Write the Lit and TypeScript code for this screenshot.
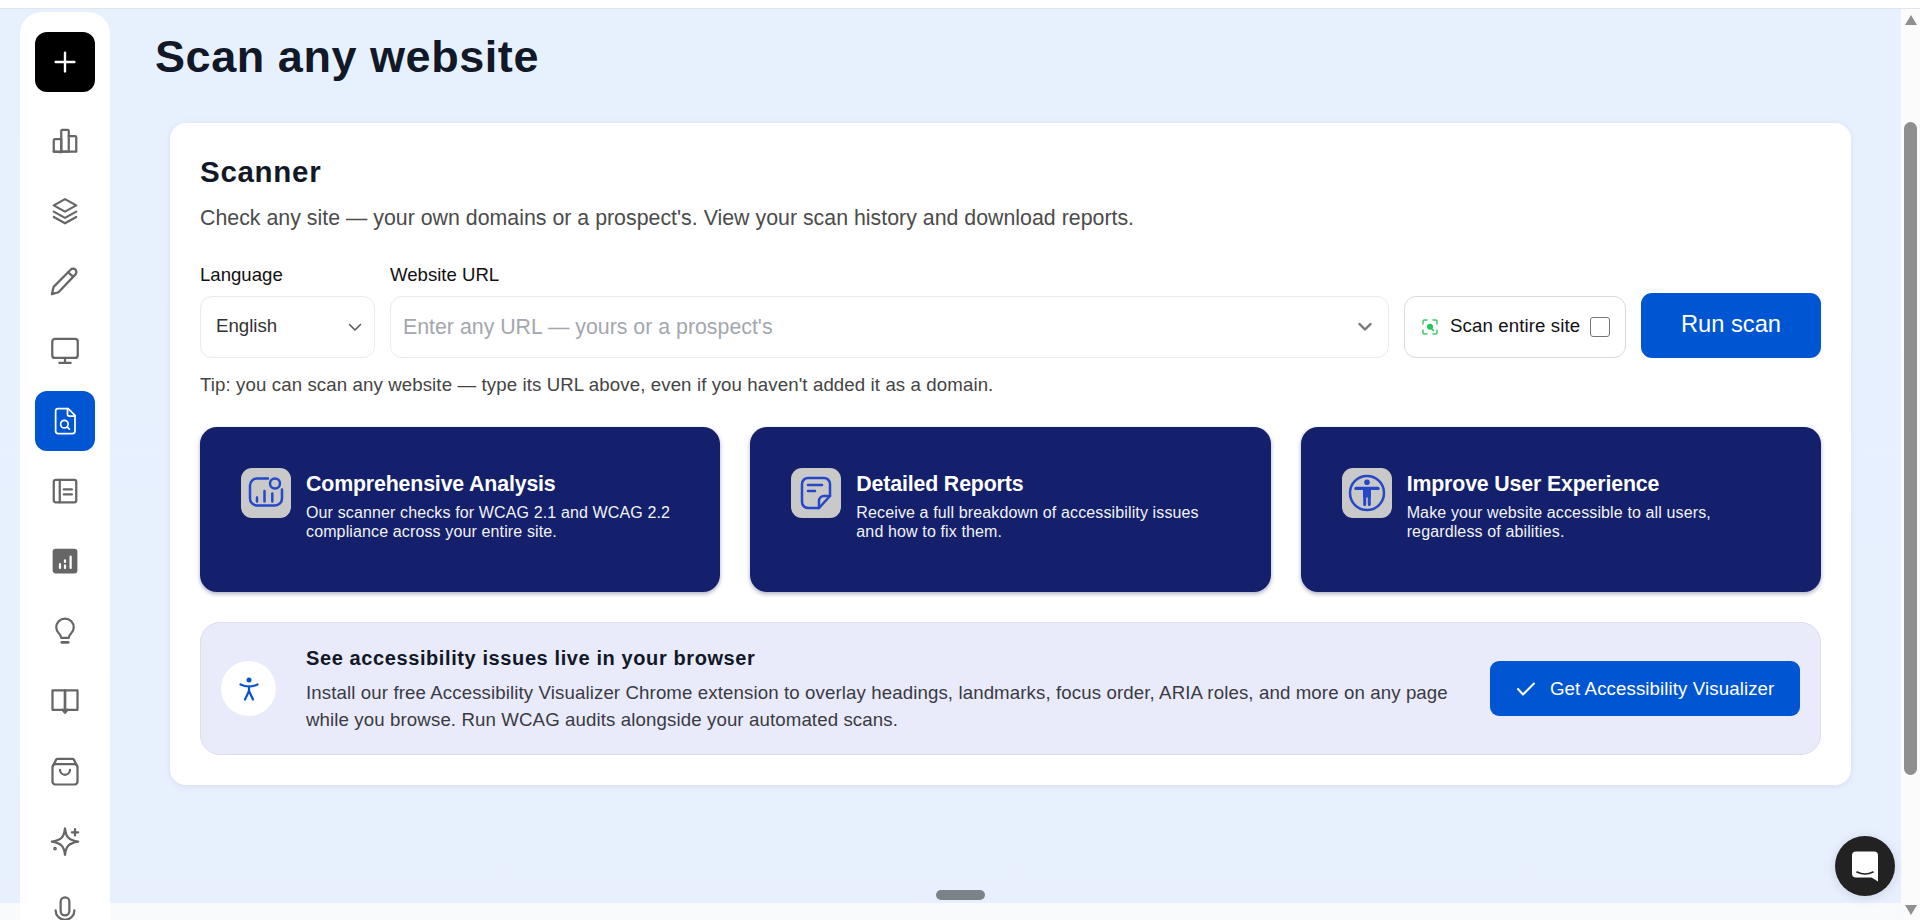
import { LitElement, html, css, svg } from "lit";
import { customElement } from "lit/decorators.js";

const navIcons = [
  svg`<path d="M3 20.500V11.500a1 1 0 0 1 1-1h5v10.500z"/><path d="M9 20.500V4a1 1 0 0 1 1-1h4a1 1 0 0 1 1 1v16.500z"/><path d="M15 8h5a1 1 0 0 1 1 1v11.500H3"/>`,
  svg`<path d="M12 2.500l9 5-9 5-9-5z"/><path d="M3 12.500l9 5 9-5"/><path d="M3 16.800l9 5 9-5"/>`,
  svg`<path d="M1.500 22.500l1.400-5.800L16.500 3a2.600 2.600 0 0 1 3.900 3.700L6.800 21z"/><path d="M14.600 5l3.900 3.700"/>`,
  svg`<rect x="1.800" y="2.300" width="20.400" height="15.200" rx="2.200"/><path d="M12 17.500v4M7.500 21.500h9"/>`,
];
const navIconsAfter = [
  svg`<rect x="3" y="3" width="18" height="18" rx="1.500"/><path d="M7.800 3v18M11 10.700h6.500M11 14.700h6.500"/>`,
  svg`<rect x="3" y="3" width="18" height="18" rx="1.500" fill="#666"/><path stroke="#fff" d="M8 14.500v3M12 11.500v1.200M12 15.500v2M16.500 8.500v9"/>`,
  svg`<path d="M9 17.500c0-1.600-.8-2.400-1.700-3.300A7 7 0 1 1 16.700 14.200C15.800 15.100 15 15.900 15 17.500z"/><path d="M9.500 21h5" stroke-width="2.200"/>`,
  svg`<path d="M2 3.500h10v15.500H2z"/><path d="M12 3.500h10v15.500H12z"/><path d="M10 19l2 2.500 2-2.500"/><path d="M12 5v14"/>`,
  svg`<rect x="2" y="6.500" width="20" height="16.300" rx="2.500"/><path d="M2.300 8l2.700-5.300c.2-.3.5-.5.9-.5h12.200c.4 0 .7.2.9.5L21.700 8"/><path d="M8 11a4 4 0 0 0 8 0"/>`,
  svg`<path d="M12 2C12.800 9 15 11.300 22.500 12.500 15 13.700 12.800 16 12 23 11.200 16 9 13.700 1.500 12.500 9 11.300 11.200 9 12 2z"/><path d="M20 2.500v5M17.500 5h5"/><circle cx="4" cy="18" r=".6"/>`,
  svg`<rect x="8.500" y="1" width="7" height="14.500" rx="3.500"/><path d="M4.500 11.500a7.500 7.500 0 0 0 15 0"/><path d="M12 19v4"/>`,
];

@customElement("app-root")
export class AppRoot extends LitElement {
  static styles = css`
    :host { display: block; height: 920px; overflow: hidden; font-family: "Liberation Sans", Arial, sans-serif; color: #111827; position: relative; background: #fff; }
    * { box-sizing: border-box; }
    .top { height: 9px; background: #fff; border-bottom: 1px solid #dfe5ea; }
    .body { display: flex; height: 911px; }
    .col { flex: 1; min-width: 0; display: flex; flex-direction: column; position: relative; }
    .stage { flex: 1; min-height: 0; display: flex; background: linear-gradient(#e7f1fe, #e8f0fe); }
    .strip { height: 17px; background: #f8fafc; }
    .scrollbar { width: 19px; background: #fbfbfb; position: relative; display: flex; flex-direction: column; align-items: center; }
    .arrow-up { width: 0; height: 0; border-left: 6.500px solid transparent; border-right: 6.500px solid transparent; border-bottom: 10px solid #8f8f8f; margin-top: 6px; }
    .thumb { width: 13px; height: 653px; margin-top: 97px; background: #8f8f8f; border-radius: 7px; }
    .arrow-down { width: 0; height: 0; border-left: 6.500px solid transparent; border-right: 6.500px solid transparent; border-top: 10px solid #8f8f8f; margin-top: 130px; }

    .side { width: 90px; margin: 3px 0 -60px 20px; background: #fff; border-radius: 22px 22px 0 0; display: flex; flex-direction: column; align-items: center; padding-top: 20px; flex: none; position: relative; z-index: 1; height: 1000px; }
    .nav { width: 60px; height: 60px; flex: none; margin-bottom: 10px; border-radius: 12px; display: flex; align-items: center; justify-content: center; }
    .nav svg { width: 30px; height: 30px; fill: none; stroke: #666; stroke-width: 1.800; stroke-linecap: round; stroke-linejoin: round; }
    .nav.plus { background: #000; margin-bottom: 19px; }
    .nav.plus svg { stroke: #fff; stroke-width: 1.900; }
    .nav.active { background: #0056d2; }
    .nav.active svg { stroke: #fff; stroke-width: 1.400; }

    .main { flex: 1; min-width: 0; padding: 0 50px 0 60px; }
    h1 { margin: 26px 0 0 -15px; font-size: 45px; line-height: 44px; letter-spacing: .55px; font-weight: 700; color: #111827; }
    .card { margin-top: 44px; height: 662px; background: #fff; border-radius: 16px; padding: 32px 30px 30px; box-shadow: 0 1px 6px rgba(60, 80, 120, .1); }
    h2 { margin: 0; font-size: 29.500px; line-height: 34px; letter-spacing: .7px; font-weight: 700; color: #111827; }
    .sub { margin: 15px 0 0; font-size: 21.330px; line-height: 28px; letter-spacing: .01px; color: #4b4b4b; }
    .labels { display: flex; gap: 15px; margin-top: 32px; font-size: 18.600px; line-height: 22px; color: #111; }
    .labels span:first-child { width: 175px; }
    .controls { display: flex; gap: 15px; align-items: flex-end; margin-top: 7px; }
    .field { height: 62px; border: 1px solid #e9ebef; border-radius: 12px; background: #fff; display: flex; align-items: center; }
    .lang { width: 175px; padding: 0 12px 0 15px; justify-content: space-between; font-size: 18.670px; color: #333; }
    .lang span, .entire span { padding-bottom: 2px; }
    .lang svg, .url svg { fill: none; stroke: #555; stroke-width: 1.500; stroke-linecap: round; stroke-linejoin: round; }
    .url { flex: 1; min-width: 0; padding: 0 16px 0 12px; justify-content: space-between; font-size: 21.330px; color: #a3a7ae; }
    .url svg { stroke: #747474; stroke-width: 2.400; }
    .entire { width: 222px; padding: 0 15px 0 17px; border: 1.500px solid #d9dbe0; gap: 12px; font-size: 18.670px; letter-spacing: .1px; color: #111; white-space: nowrap; }
    .entire svg { flex: none; }
    .entire input { width: 20px; height: 20px; margin: 0 0 0 -2px; flex: none; appearance: none; border: 1.500px solid #767676; border-radius: 3px; background: #fff; }
    .run { width: 180px; height: 65px; background: #0056d2; color: #fff; border-radius: 11px; display: flex; align-items: center; justify-content: center; font-size: 23.700px; padding-bottom: 2px; }
    .tip { margin: 15px 0 0; font-size: 18.670px; line-height: 24px; letter-spacing: .1px; color: #444; }
    .features { display: grid; grid-template-columns: repeat(3, 1fr); gap: 30px; margin-top: 30px; }
    .feature { height: 165px; background: #14206b; border-radius: 17px; padding: 41px 30px 0 41px; display: flex; gap: 15px; color: #fff; box-shadow: 0 2px 4px rgba(20, 30, 80, .35); }
    .ibox { width: 50px; height: 50px; flex: none; background: #c9c9c9; border-radius: 11px; }
    .ibox svg { display: block; width: 50px; height: 50px; fill: none; stroke: #2547c8; stroke-width: 2.500; stroke-linecap: round; stroke-linejoin: round; }
    .feature h3 { margin: 4px 0 0; font-size: 21.330px; line-height: 24px; letter-spacing: -.15px; font-weight: 700; }
    .feature p { margin: 7px 0 0; font-size: 16px; line-height: 19px; letter-spacing: .13px; color: #f2f3f8; }
    .banner { margin-top: 30px; height: 133px; background: #e9ebfa; border: 1px solid #dcdeec; border-radius: 20px; padding: 0 20px; display: flex; align-items: center; }
    .circle { width: 55px; height: 55px; flex: none; background: #fff; border-radius: 50%; display: flex; align-items: center; justify-content: center; margin-right: 30px; }
    .btext { flex: 1; min-width: 0; padding-right: 25px; }
    .btext h3 { margin: 0; font-size: 20px; line-height: 26px; letter-spacing: .6px; font-weight: 700; color: #111827; }
    .btext p { margin: 8px 0 0; font-size: 18.670px; line-height: 27px; letter-spacing: .11px; color: #3a3a44; }
    .visual { width: 310px; height: 55px; flex: none; background: #0056d2; color: #fff; border-radius: 9px; display: flex; align-items: center; gap: 15px; padding-left: 27px; font-size: 18.670px; letter-spacing: .1px; white-space: nowrap; }

    .handle { position: absolute; left: 936px; bottom: 20px; width: 49px; height: 10px; border-radius: 5px; background: #7b8389; z-index: 2; }
    .chat { position: absolute; right: 6px; bottom: 24px; width: 60px; height: 60px; border-radius: 50%; background: #222; display: flex; align-items: center; justify-content: center; z-index: 2; box-shadow: 0 2px 12px rgba(0, 0, 40, .12); }
  `;

  render() {
    const nav = (i: unknown) => html`<div class="nav"><svg viewBox="0 0 24 24">${i}</svg></div>`;
    return html`
      <div class="top"></div>
      <div class="body">
        <div class="col">
          <div class="stage">
            <aside class="side">
              <div class="nav plus"><svg viewBox="0 0 24 24"><path d="M12 4.500v15M4.500 12h15"/></svg></div>
              ${navIcons.map(nav)}
              <div class="nav active"><svg viewBox="0 0 24 24"><path d="M6.500 2h8l5.500 5.500V20a2 2 0 0 1-2 2H6.500a2 2 0 0 1-2-2V4a2 2 0 0 1 2-2z"/><path d="M14 2v4.500a1.500 1.500 0 0 0 1.500 1.500H20"/><circle cx="11.500" cy="14.500" r="3"/><path d="M13.800 16.800l1.700 1.700"/></svg></div>
              ${navIconsAfter.map(nav)}
            </aside>
            <main class="main">
              <h1>Scan any website</h1>
              <section class="card">
                <h2>Scanner</h2>
                <p class="sub">Check any site — your own domains or a prospect's. View your scan history and download reports.</p>
                <div class="labels"><span>Language</span><span>Website URL</span></div>
                <div class="controls">
                  <div class="field lang"><span>English</span><svg width="14" height="14" viewBox="0 0 14 14"><path d="M1.500 4.500L7 10l5.500-5.500"/></svg></div>
                  <div class="field url"><span>Enter any URL — yours or a prospect's</span><svg width="14" height="14" viewBox="0 0 14 14"><path d="M1.500 4L7 9.500 12.500 4"/></svg></div>
                  <div class="field entire">
                    <svg width="16" height="16" viewBox="0 0 16 16" fill="none" stroke="#3ccb6c" stroke-width="1.500" stroke-linecap="round"><path d="M1 5V2.500A1.500 1.500 0 0 1 2.500 1H5M11 1h2.500A1.500 1.500 0 0 1 15 2.500V5M15 11v2.500a1.500 1.500 0 0 1-1.500 1.500H11M5 15H2.500A1.500 1.500 0 0 1 1 13.500V11"/><circle cx="8" cy="7.800" r="3" fill="#22c55e" stroke="none"/><path d="M10 10l1.500 1.500" stroke="#22c55e"/></svg>
                    <span>Scan entire site</span>
                    <input type="checkbox" aria-label="Scan entire site" />
                  </div>
                  <div class="run">Run scan</div>
                </div>
                <p class="tip">Tip: you can scan any website — type its URL above, even if you haven't added it as a domain.</p>
                <div class="features">
                  <div class="feature">
                    <div class="ibox"><svg viewBox="0 0 50 50"><path d="M27 10.500H16a7 7 0 0 0-7 7v13a7 7 0 0 0 7 7h18a7 7 0 0 0 7-7v-9"/><circle cx="34" cy="15.500" r="5"/><path d="M16 29.500V33.500M23.500 23V33.500M31.300 25.500V33.500"/></svg></div>
                    <div><h3>Comprehensive Analysis</h3><p>Our scanner checks for WCAG 2.1 and WCAG 2.2<br />compliance across your entire site.</p></div>
                  </div>
                  <div class="feature">
                    <div class="ibox"><svg viewBox="0 0 50 50"><path d="M17 10h16a6 6 0 0 1 6 6v12L28 40H17a6 6 0 0 1-6-6V16a6 6 0 0 1 6-6z"/><path d="M39 28h-6a5 5 0 0 0-5 5v7"/><path d="M17 17h14M17 23h7"/></svg></div>
                    <div><h3>Detailed Reports</h3><p>Receive a full breakdown of accessibility issues<br />and how to fix them.</p></div>
                  </div>
                  <div class="feature">
                    <div class="ibox"><svg viewBox="0 0 50 50"><circle cx="25" cy="25" r="17"/><circle cx="25" cy="14.300" r="2.800" fill="#2547c8" stroke="none"/><path d="M14 20.400h22" stroke-width="3.400"/><path d="M21 20h8v9.500h-8z" fill="#2547c8" stroke="none"/><path d="M22.700 29v7.500M27.300 29v7.500" stroke-width="3"/></svg></div>
                    <div><h3>Improve User Experience</h3><p>Make your website accessible to all users,<br />regardless of abilities.</p></div>
                  </div>
                </div>
                <div class="banner">
                  <div class="circle"><svg width="22" height="24" viewBox="0 0 22 24" fill="none" stroke="#0a50d0" stroke-width="2.200" stroke-linecap="round"><circle cx="11" cy="3" r="2.500" fill="#0a50d0" stroke="none"/><path d="M2.500 7.500c3 1.500 5.500 2 8.500 2s5.500-.5 8.500-2"/><path d="M11 9.500v5"/><path d="M11 14l-4 8.500M11 14l4 8.500"/></svg></div>
                  <div class="btext">
                    <h3>See accessibility issues live in your browser</h3>
                    <p>Install our free Accessibility Visualizer Chrome extension to overlay headings, landmarks, focus order, ARIA roles, and more on any page while you browse. Run WCAG audits alongside your automated scans.</p>
                  </div>
                  <div class="visual"><svg width="18" height="14" viewBox="0 0 18 14" fill="none" stroke="#fff" stroke-width="2" stroke-linecap="round" stroke-linejoin="round"><path d="M1 7l5 5.500L17 1.500"/></svg><span>Get Accessibility Visualizer</span></div>
                </div>
              </section>
            </main>
          </div>
          <div class="strip"></div>
          <div class="handle"></div>
          <div class="chat"><svg width="28" height="31" viewBox="0 0 28 31"><path d="M5 .5h18a4 4 0 0 1 4 4V30.500l-6.500-4H5a4 4 0 0 1-4-4V4.500a4 4 0 0 1 4-4z" fill="#fff"/><path d="M6 21c5 2.500 11 2.500 16 0" fill="none" stroke="#222" stroke-width="1.600" stroke-linecap="round"/></svg></div>
        </div>
        <div class="scrollbar"><div class="arrow-up"></div><div class="thumb"></div><div class="arrow-down"></div></div>
      </div>
    `;
  }
}
